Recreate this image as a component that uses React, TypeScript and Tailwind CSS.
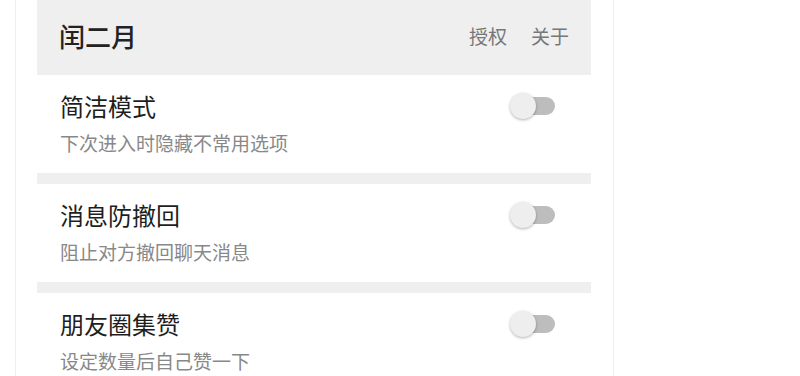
import { useState } from 'react'

const font = { fontFamily: '"Noto Sans CJK SC", "Noto Sans", sans-serif' }

const options = [
  { title: '简洁模式', desc: '下次进入时隐藏不常用选项' },
  { title: '消息防撤回', desc: '阻止对方撤回聊天消息' },
  { title: '朋友圈集赞', desc: '设定数量后自己赞一下' },
]

function Toggle({ on, onChange }: { on: boolean; onChange: () => void }) {
  return (
    <button onClick={onChange} className="relative w-[45px] h-[26px] flex items-center shrink-0">
      <span className={`absolute left-[1px] right-0 h-[18px] rounded-full ${on ? 'bg-[#a5d6a7]' : 'bg-[#bdbdbd]'}`} />
      <span
        className={`absolute top-0 w-[26px] h-[26px] rounded-full shadow-[0_1px_3px_rgba(0,0,0,0.3)] transition-all ${
          on ? 'left-[19px] bg-[#4caf50]' : 'left-0 bg-[#eeeeee]'
        }`}
      />
    </button>
  )
}

export default function App() {
  const [state, setState] = useState([false, false, false])

  return (
    <div className="min-h-[376px] bg-white" style={font}>
      <div className="ml-[15px] w-[599px] min-h-[376px] border-x border-[#eeeeee] pl-[21px] pr-[22px]">
        <div className="h-[75px] bg-[#efefef] flex items-center pl-[22px] pr-[22px] pb-[3px]">
          <h1 className="flex-1 text-[26px] leading-none font-medium text-[#222]">闰二月</h1>
          <div className="flex gap-[24px] text-[19px] text-[#777]">
            <span>授权</span>
            <span>关于</span>
          </div>
        </div>

        {options.map((opt, i) => (
          <div key={opt.title}>
            {i > 0 && <div className="h-[11px] bg-[#efefef]" />}
            <div className="pt-[15px] pb-[15px] pl-[23px] pr-[36px]">
              <div className="flex items-center justify-between h-[32px]">
                <span className="text-[24px] leading-[32px] text-[#1e1e1e]">{opt.title}</span>
                <Toggle
                  on={state[i]}
                  onChange={() => setState((prev) => prev.map((v, j) => (j === i ? !v : v)))}
                />
              </div>
              <p className="mt-[8px] mb-[2px] text-[19px] leading-[26px] text-[#888]">{opt.desc}</p>
            </div>
          </div>
        ))}
      </div>
    </div>
  )
}
